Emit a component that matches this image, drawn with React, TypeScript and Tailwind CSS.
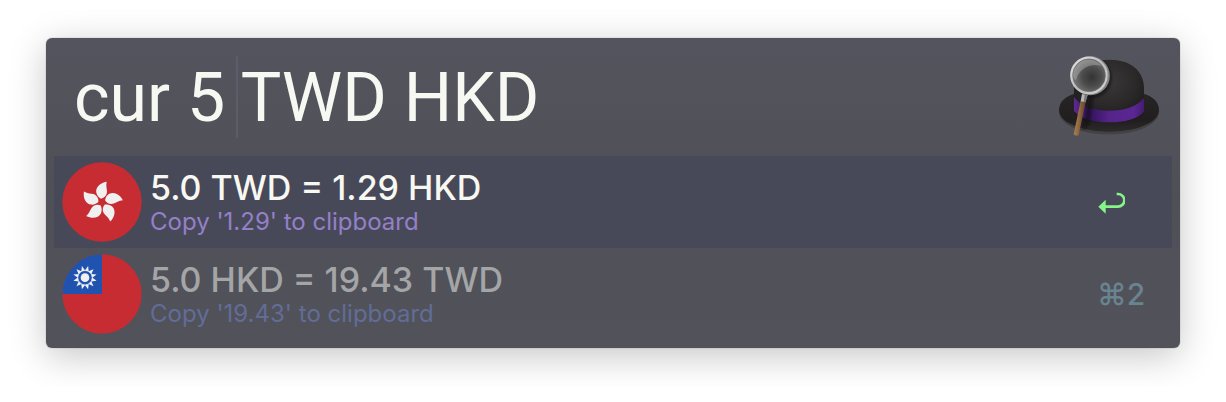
import { useState } from "react";

function HatIcon() {
  return (
    <svg viewBox="54 72 306 252" className="h-[84px] w-[102px] shrink-0" role="img" aria-label="Alfred">
      <defs>
        <radialGradient id="crown" cx="0.5" cy="0.35" r="0.65">
          <stop offset="0" stopColor="#3a3838" />
          <stop offset="0.6" stopColor="#2a2828" />
          <stop offset="1" stopColor="#1b1919" />
        </radialGradient>
        <linearGradient id="brim" x1="0" y1="0" x2="0" y2="1">
          <stop offset="0" stopColor="#262424" />
          <stop offset="0.7" stopColor="#201e1e" />
          <stop offset="1" stopColor="#2c2a2a" />
        </linearGradient>
        <linearGradient id="band" x1="0" y1="0" x2="1" y2="0">
          <stop offset="0" stopColor="#5c2a94" />
          <stop offset="0.22" stopColor="#33145a" />
          <stop offset="0.5" stopColor="#55248a" />
          <stop offset="0.85" stopColor="#5b2792" />
          <stop offset="1" stopColor="#431c70" />
        </linearGradient>
        <radialGradient id="lens" cx="0.58" cy="0.55" r="0.55">
          <stop offset="0" stopColor="#343434" />
          <stop offset="0.5" stopColor="#4c4c4c" />
          <stop offset="1" stopColor="#7c7c7c" />
        </radialGradient>
        <linearGradient id="rim" x1="0" y1="0" x2="1" y2="1">
          <stop offset="0" stopColor="#e4e4e4" />
          <stop offset="0.5" stopColor="#bdbdbd" />
          <stop offset="1" stopColor="#d2d2d2" />
        </linearGradient>
        <linearGradient id="handle" x1="0" y1="0" x2="1" y2="0.2">
          <stop offset="0" stopColor="#b58a5e" />
          <stop offset="0.5" stopColor="#946a42" />
          <stop offset="1" stopColor="#5e4026" />
        </linearGradient>
        <filter id="soft" x="-30%" y="-30%" width="160%" height="160%">
          <feGaussianBlur stdDeviation="5" />
        </filter>
        <clipPath id="hat">
          <path d="M57 245C57 216 80 199 102 192V172C102 122 144 89 208 89C272 89 312 122 312 176V192C336 199 357 218 357 245C357 284 289 313 207 313S57 284 57 245Z" />
        </clipPath>
      </defs>
      <path d="M57 245C57 216 80 199 104 192H310C336 199 357 218 357 245C357 284 289 313 207 313S57 284 57 245Z" fill="#434141" />
      <path d="M57 240C57 213 80 198 104 191H310C336 198 357 214 357 240C357 278 289 305 207 305S57 278 57 240Z" fill="url(#brim)" />
      <path d="M102 250V172C102 122 144 89 208 89C272 89 312 122 312 176V250C300 268 254 277 207 277S114 268 102 250Z" fill="url(#crown)" />
      <path d="M102 201C122 228 160 242 207 242S292 229 312 203V245C294 267 254 277 207 277S120 267 102 243Z" fill="url(#band)" />
      <g clipPath="url(#hat)">
        <path d="M160 198L146 282L128 302L146 196Z" fill="#0c0a0c" opacity="0.6" filter="url(#soft)" />
        <circle cx="158" cy="144" r="56" fill="#0c0a0c" opacity="0.7" filter="url(#soft)" />
      </g>
      <path d="M122 212L137 215L116 316Q107 320 101 313Z" fill="url(#handle)" />
      <path d="M126 192L143 195L136 217L122 214Z" fill="#b9b9b9" />
      <path d="M134 194L143 195L136 217L131 216Z" fill="#777" />
      <circle cx="151" cy="137" r="55" fill="none" stroke="#858585" strokeWidth="7" />
      <circle cx="147" cy="136" r="53" fill="url(#lens)" />
      <path d="M99 134C102 106 124 87 151 89C166 91 178 98 186 108C150 98 118 115 108 150C102 147 98 142 99 134Z" fill="#c0c0c0" opacity="0.38" />
      <circle cx="147" cy="136" r="53" fill="none" stroke="url(#rim)" strokeWidth="7" />
      <circle cx="147" cy="136" r="49" fill="none" stroke="#6b6b6b" strokeWidth="1.5" />
    </svg>
  );
}

const PETAL =
  "M170 95C150 98 136 112 139 128C141 137 147 142 153 146C163 144 171 136 171 124C171 117 167 108 170 95Z";

function HongKongFlag() {
  return (
    <svg viewBox="36 36 240 240" className="size-20 shrink-0" aria-hidden="true">
      <circle cx="156" cy="156" r="119" fill="#c82c33" />
      {[0, 72, 144, 216, 288].map((angle) => (
        <path key={angle} d={PETAL} fill="#f0f0f0" transform={`rotate(${angle} 156 156.5)`} />
      ))}
    </svg>
  );
}

function TaiwanFlag() {
  return (
    <svg viewBox="36 27 240 240" className="size-20 shrink-0" aria-hidden="true">
      <circle cx="156" cy="147" r="119" fill="#c82c33" />
      <path d="M37 147A119 119 0 0 1 156 28V147Z" fill="#2053b0" />
      {Array.from({ length: 12 }, (_, i) => (
        <path key={i} d="M105 62L111 77H99Z" fill="#f0f0f0" transform={`rotate(${15 + i * 30} 105 98)`} />
      ))}
      <circle cx="105" cy="98" r="21.5" fill="none" stroke="#f0f0f0" strokeWidth="2" />
      <circle cx="105" cy="98" r="13" fill="#f0f0f0" />
    </svg>
  );
}

function ReturnIcon() {
  return (
    <svg viewBox="82 61 84 69" className="h-[23px] w-7" aria-hidden="true">
      <path d="M86 108L108 87V129Z" fill="#86f588" />
      <path d="M141 70H145A19 19 0 0 1 145 108H106" fill="none" stroke="#86f588" strokeWidth="8" />
    </svg>
  );
}

export default function App() {
  const [query, setQuery] = useState("cur 5 TWD HKD");

  return (
    <main className="px-[46px] py-[38px] font-['Inter',sans-serif]">
      <section className="rounded-md bg-linear-to-b from-[#53545d] via-[#4f5057] to-[#52525b] px-2 pb-2 shadow-[0_0_1px_#00000099,0_8px_36px_#0000003a]">
        <header className="flex items-start justify-between pt-4 pr-3 pb-[18px] pl-5">
          <div className="relative h-[84px] min-w-0 flex-1">
            <input
              type="text"
              aria-label="Search"
              value={query}
              onChange={(e) => setQuery(e.target.value)}
              className="h-full w-full bg-transparent pt-1 font-['Roboto',sans-serif] text-[68px] leading-[80px] text-[#f8f8f2] outline-none"
            />
            <span className="absolute top-0.5 bottom-0 left-[162px] w-0.5 bg-[#5c5d68]" />
          </div>
          <HatIcon />
        </header>
        <ul>
          <li>
            <button type="button" className="flex w-full items-center gap-2 bg-[#474959] px-2 py-1.5 pr-0 text-left">
              <HongKongFlag />
              <span className="flex min-w-0 flex-1 flex-col">
                <span className="text-[34px] leading-10 font-medium text-[#f8f8f2]">5.0 TWD = 1.29 HKD</span>
                <span className="text-2xl leading-7 text-[#9580c8]">Copy '1.29' to clipboard</span>
              </span>
              <span className="w-[75px]">
                <ReturnIcon />
              </span>
            </button>
          </li>
          <li>
            <button type="button" className="flex w-full items-center gap-2 px-2 py-1.5 pr-0 text-left">
              <TaiwanFlag />
              <span className="flex min-w-0 flex-1 flex-col">
                <span className="text-[34px] leading-10 font-medium text-[#a4a5a6]">5.0 HKD = 19.43 TWD</span>
                <span className="text-2xl leading-7 text-[#616d97]">Copy '19.43' to clipboard</span>
              </span>
              <span className="w-[75px] text-3xl font-medium text-[#698391]">⌘2</span>
            </button>
          </li>
        </ul>
      </section>
    </main>
  );
}
